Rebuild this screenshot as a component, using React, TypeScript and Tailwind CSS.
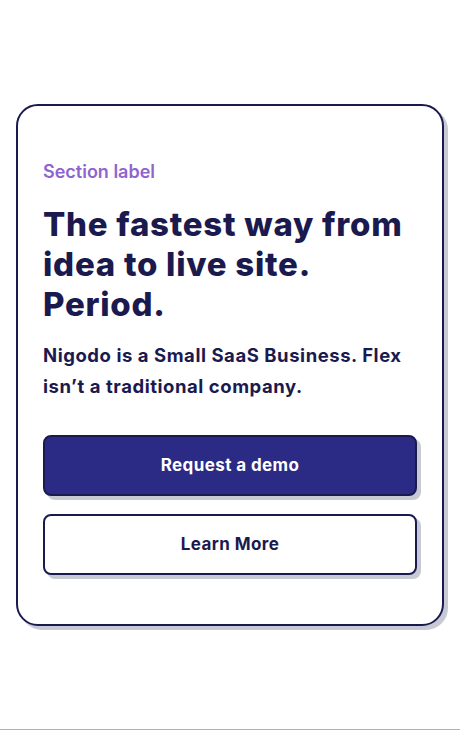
export default function App() {
  return (
    <div
      className="min-h-[730px] bg-white border-b border-[#a3b2d2] flex flex-col"
      style={{ fontFamily: "Inter, 'Noto Sans', sans-serif" }}
    >
      <div className="px-4 pt-[104px]">
        <section className="rounded-[22px] border-2 border-[#1b1a4f] bg-white shadow-[4px_4px_0_0_#c7cad3] px-[25px] pt-[54px] pb-[49px]">
          <p className="text-[18px] leading-6 font-semibold text-[#8f64cf]">
            Section label
          </p>
          <h1 className="mt-5 text-[33px] leading-[40px] font-extrabold tracking-[0.75px] text-[#1b1a4f]">
            The fastest way from idea to live site. Period.
          </h1>
          <p className="mt-4 text-[18.5px] leading-[31px] font-bold tracking-[0.55px] text-[#1b1a4f]">
            Nigodo is a Small SaaS Business. Flex isn’t a traditional company.
          </p>
          <div className="mt-[33px] flex flex-col gap-[18px]">
            <button className="h-[61px] w-full rounded-lg border-2 border-[#1b1a4f] bg-[#2b2a85] text-white text-[17px] font-bold tracking-[0.4px] shadow-[4px_4px_0_0_#c7cad3]">
              Request a demo
            </button>
            <button className="h-[61px] w-full rounded-lg border-2 border-[#1b1a4f] bg-white text-[#1b1a4f] text-[17px] font-bold tracking-[0.4px] shadow-[4px_4px_0_0_#c7cad3]">
              Learn More
            </button>
          </div>
        </section>
      </div>
    </div>
  );
}
